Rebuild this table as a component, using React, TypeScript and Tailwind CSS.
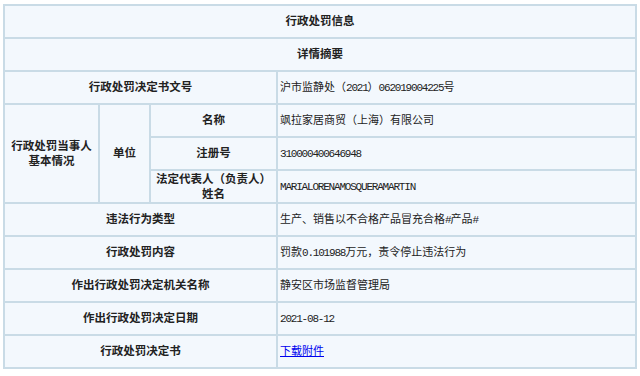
import React from 'react';

const cjk = '"Liberation Sans", "Noto Sans CJK SC", sans-serif';

function Latin({ children }: { children: React.ReactNode }) {
  return (
    <span className="font-['Liberation_Mono'] text-[11px] tracking-[-1.2px]">{children}</span>
  );
}

const th = 'border-2 border-[#c9dbe6] text-center align-middle font-bold text-[11.5px] text-[#222] leading-[15px]';
const td = 'border-2 border-[#c9dbe6] text-left align-middle pl-[2px] text-[11px] text-[#222]';

export default function App() {
  return (
    <div className="w-[640px] h-[376px] bg-white pt-[4px] pl-[3px]" style={{ fontFamily: cjk }}>
      <table className="table-fixed border-collapse w-[632px] bg-[#f3f8fd]">
        <colgroup>
          <col className="w-[95px]" />
          <col className="w-[51px]" />
          <col className="w-[127px]" />
          <col className="w-[359px]" />
        </colgroup>
        <tbody>
          <tr className="h-[33px]">
            <td colSpan={4} className={th}>行政处罚信息</td>
          </tr>
          <tr className="h-[33px]">
            <td colSpan={4} className={th}>详情摘要</td>
          </tr>
          <tr className="h-[33px]">
            <td colSpan={3} className={th}>行政处罚决定书文号</td>
            <td className={td}>沪市监静处（<Latin>2021</Latin>）<Latin>062019004225</Latin>号</td>
          </tr>
          <tr className="h-[33px]">
            <td rowSpan={3} className={th}>行政处罚当事人<br />基本情况</td>
            <td rowSpan={3} className={th}>单位</td>
            <td className={th}>名称</td>
            <td className={td}>飒拉家居商贸（上海）有限公司</td>
          </tr>
          <tr className="h-[33px]">
            <td className={th}>注册号</td>
            <td className={td}><Latin>310000400646948</Latin></td>
          </tr>
          <tr className="h-[33px]">
            <td className={th}>法定代表人（负责人）<br />姓名</td>
            <td className={td}><Latin>MARIALORENAMOSQUERAMARTIN</Latin></td>
          </tr>
          <tr className="h-[33px]">
            <td colSpan={3} className={th}>违法行为类型</td>
            <td className={td}>生产、销售以不合格产品冒充合格<Latin>#</Latin>产品<Latin>#</Latin></td>
          </tr>
          <tr className="h-[33px]">
            <td colSpan={3} className={th}>行政处罚内容</td>
            <td className={td}>罚款<Latin>0.101988</Latin>万元，责令停止违法行为</td>
          </tr>
          <tr className="h-[33px]">
            <td colSpan={3} className={th}>作出行政处罚决定机关名称</td>
            <td className={td}>静安区市场监督管理局</td>
          </tr>
          <tr className="h-[33px]">
            <td colSpan={3} className={th}>作出行政处罚决定日期</td>
            <td className={td}><Latin>2021-08-12</Latin></td>
          </tr>
          <tr className="h-[33px]">
            <td colSpan={3} className={th}>行政处罚决定书</td>
            <td className={td}>
              <a href="#" className="text-[#0000ee] underline">下载附件</a>
            </td>
          </tr>
        </tbody>
      </table>
    </div>
  );
}
